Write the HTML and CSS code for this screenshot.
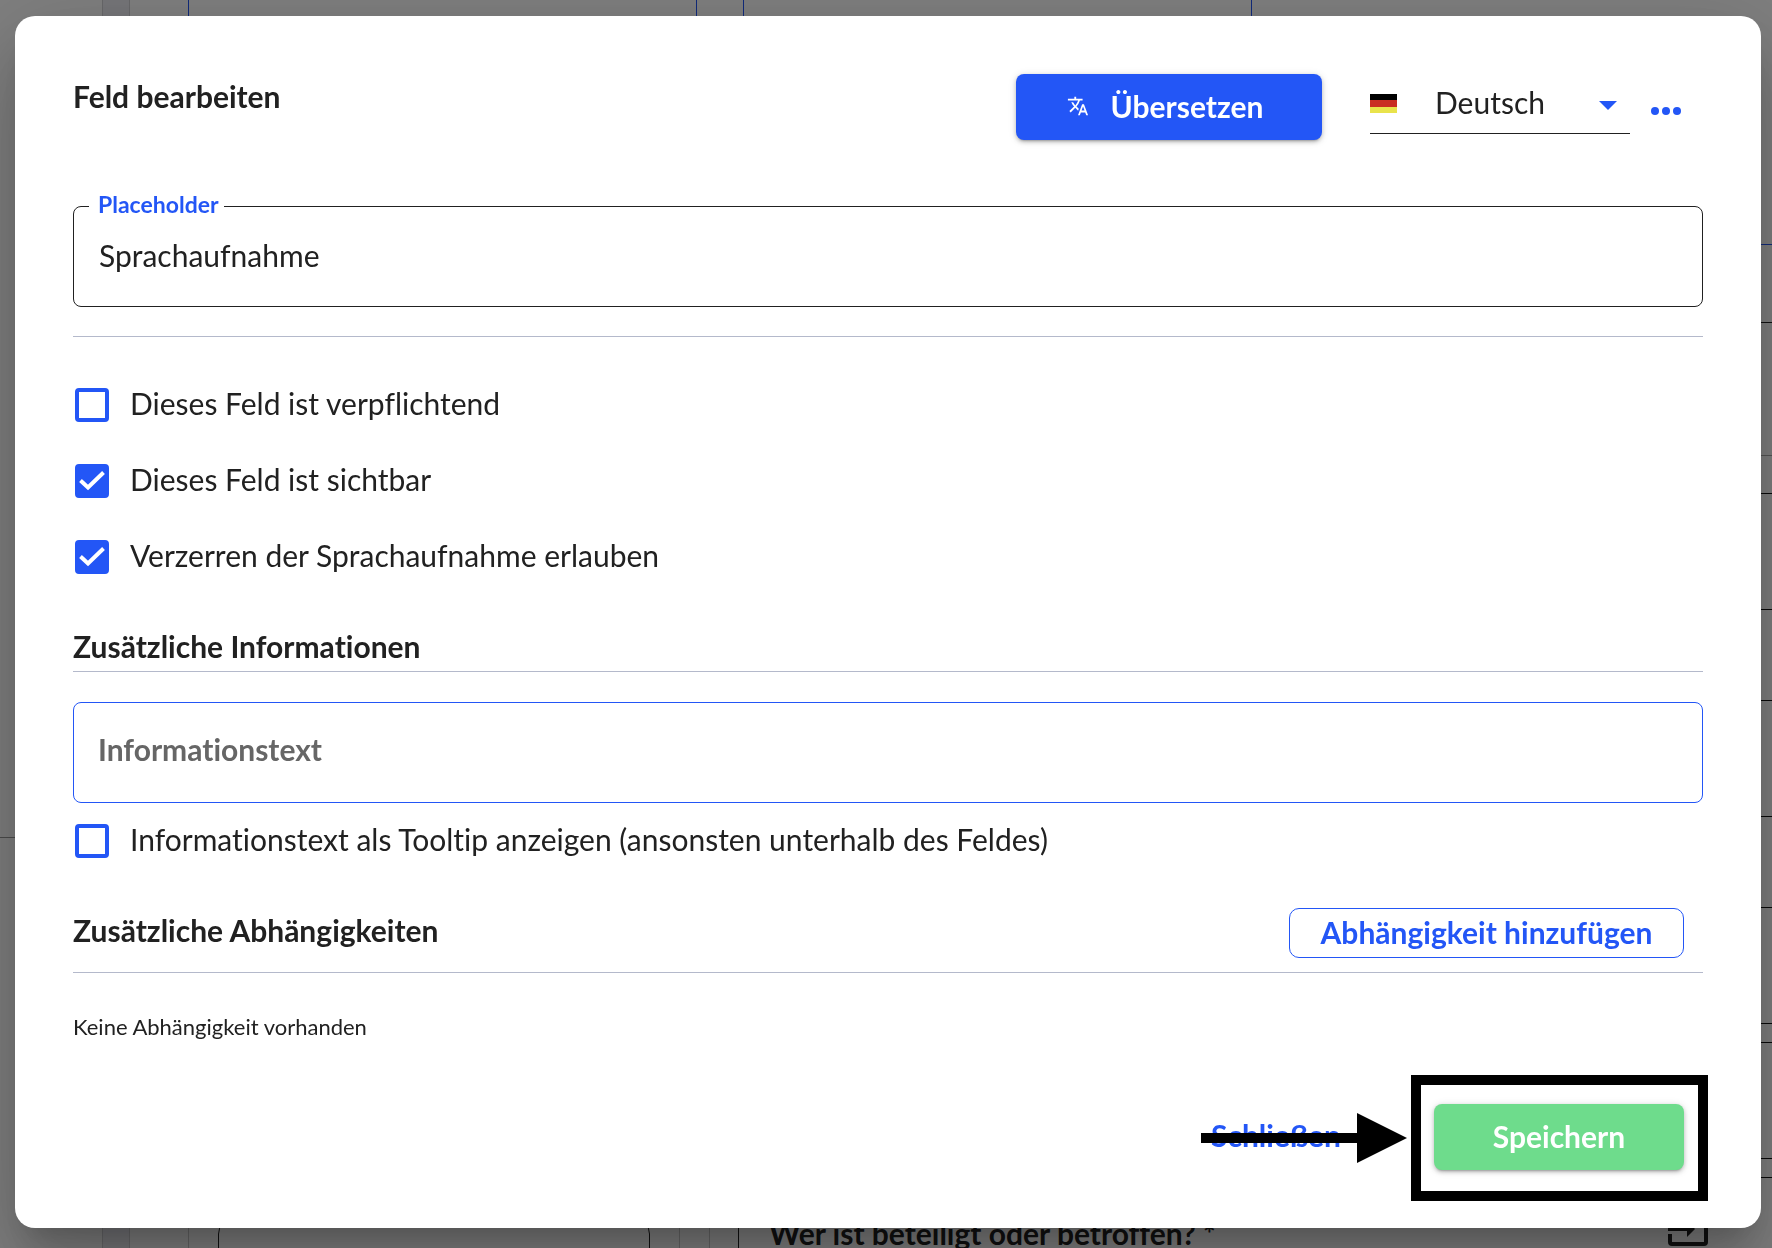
FILE: index.html
```html
<!DOCTYPE html>
<html lang="de">
<head>
<meta charset="utf-8">
<meta name="viewport" content="width=device-width, initial-scale=1">
<title>Feld bearbeiten</title>
<link rel="stylesheet" href="styles.css">
</head>
<body>
<div class="page" aria-hidden="true">
  <div class="sidebar"><div class="sidebar-main"></div><div class="sidebar-foot"></div></div>
  <div class="rail"></div>
  <div class="board">
    <div class="board-top">
      <div class="card"></div>
      <div class="card"></div>
    </div>
    <div class="board-bottom">
      <div class="group"><div class="group-field"></div></div>
      <div class="form">
        <div class="question">
          <span>Wer ist beteiligt oder betroffen? *</span>
          <svg class="enter-icon" viewBox="0 0 40 40" width="40" height="40"><path d="M2 16V8q0-2 2-2h32q2 0 2 2v26q0 2-2 2H4q-2 0-2-2v-8M0 21h20" fill="none" stroke="currentColor" stroke-width="4"/><path d="M19 13l8 8-8 8z" fill="currentColor"/></svg>
        </div>
      </div>
    </div>
  </div>
  <div class="options">
    <div class="opt opt-blue"></div>
    <div class="opt opt-plain"></div>
    <div class="opt opt-light"></div>
    <div class="opt-field"></div>
    <div class="opt-field wide"></div>
    <div class="opt-field"></div>
    <div class="opt-field"></div>
    <div class="opt-field"></div>
  </div>
</div>

<div class="overlay">
  <main class="dialog" role="dialog" aria-labelledby="dialog-title">
    <header class="dialog-header">
      <h1 class="title" id="dialog-title">Feld bearbeiten</h1>
      <button class="btn btn-primary" type="button">
        <svg class="translate-icon" viewBox="0 0 24 24" width="22" height="22"><path fill="currentColor" d="M12.87 15.07l-2.54-2.51.03-.03A17.52 17.52 0 0 0 14.07 6H17V4h-7V2H8v2H1v1.99h11.17C11.5 7.92 10.44 9.75 9 11.35 8.07 10.32 7.3 9.19 6.69 8h-2c.73 1.63 1.73 3.17 2.98 4.56l-5.09 5.02L4 19l5-5 3.11 3.11.76-2.04zM18.5 10h-2L12 22h2l1.12-3h4.75L21 22h2l-4.5-12zm-2.62 7l1.62-4.33L19.12 17h-3.24z"/></svg>
        <span>Übersetzen</span>
      </button>
      <div class="language">
        <svg class="flag" viewBox="0 0 27 19" width="27" height="19"><path fill="#000" d="M0 0h27v6H0z"/><path fill="#c92d22" d="M0 6h27v7H0z"/><path fill="#e9e34b" d="M0 13h27v6H0z"/></svg>
        <select class="language-select" aria-label="Sprache"><option>Deutsch</option></select>
        <svg class="caret" viewBox="0 0 18 9" width="18" height="9"><path fill="currentColor" d="M0 0h18L9 9z"/></svg>
      </div>
      <button class="more" type="button" aria-label="Mehr">
        <svg viewBox="0 0 30 8" width="30" height="8"><g fill="currentColor"><circle cx="4" cy="4" r="4"/><circle cx="15" cy="4" r="4"/><circle cx="26" cy="4" r="4"/></g></svg>
      </button>
    </header>

    <fieldset class="outlined">
      <legend><label for="placeholder">Placeholder</label></legend>
      <input id="placeholder" type="text" value="Sprachaufnahme">
    </fieldset>
    <hr class="divider">

    <div class="checks">
      <label class="check"><span class="box"><input type="checkbox"></span><span class="check-text">Dieses Feld ist verpflichtend</span></label>
      <label class="check"><span class="box"><input type="checkbox" checked><svg viewBox="0 0 34 34" width="34" height="34"><path d="M5.5 16.5l7.5 7L28.5 8.5"/></svg></span><span class="check-text">Dieses Feld ist sichtbar</span></label>
      <label class="check"><span class="box"><input type="checkbox" checked><svg viewBox="0 0 34 34" width="34" height="34"><path d="M5.5 16.5l7.5 7L28.5 8.5"/></svg></span><span class="check-text">Verzerren der Sprachaufnahme erlauben</span></label>
    </div>

    <h2 class="section-title">Zusätzliche Informationen</h2>
    <input class="info" type="text" placeholder="Informationstext" aria-label="Informationstext">
    <label class="check"><span class="box"><input type="checkbox"></span><span class="check-text">Informationstext als Tooltip anzeigen (ansonsten unterhalb des Feldes)</span></label>

    <div class="section-bar">
      <h2>Zusätzliche Abhängigkeiten</h2>
      <button class="btn-outline" type="button">Abhängigkeit hinzufügen</button>
    </div>
    <p class="empty">Keine Abhängigkeit vorhanden</p>

    <footer class="dialog-footer">
      <button class="btn-text" type="button">Schließen</button>
      <div class="highlight">
        <button class="btn btn-save" type="button">Speichern</button>
        <svg class="arrow" viewBox="0 0 206 50" width="206" height="50"><path d="M0 20h156V0l50 25-50 25V30H0z"/></svg>
      </div>
    </footer>
  </main>
</div>
</body>
</html>
```
FILE: styles.css
```css
* { box-sizing: border-box; }

body {
  margin: 0;
  background: #fff;
  color: #212121;
  font: 30px/40px Lato, "Noto Sans", sans-serif;
  font-variant-ligatures: none;
}

button, input, select { font: inherit; font-variant-ligatures: none; color: inherit; margin: 0; }
button { cursor: pointer; }
h1, h2 { margin: 0; font-size: 30px; font-weight: 700; }

/* Page behind the dialog */
.page { display: flex; height: 100vh; overflow: hidden; }
.sidebar { display: flex; flex-direction: column; width: 103px; border-right: 1px solid #d0d0d4; }
.sidebar-main { flex: 1; }
.sidebar-foot { height: 411px; border-top: 1px solid #999; }
.rail { width: 27px; background: #ececf2; border-right: 1px solid #d0d0d4; }
.board { flex: 1; display: flex; flex-direction: column; padding-left: 58px; }
.board-top { flex: 1; display: flex; gap: 46px; }
.card { width: 509px; border: 1px solid #2356f6; border-width: 0 1px; }
.board-bottom { display: flex; gap: 29px; height: 60px; }
.group { width: 492px; padding: 30px 29px 0; border: 1px solid #ccc; border-width: 0 1px; }
.group-field { height: 60px; border: 1px solid #222; border-radius: 16px; }
.form { flex: 1; padding-left: 28px; border-left: 1px solid #ccc; }
.question { display: flex; justify-content: space-between; padding: 20px 52px 0 30px; border-left: 1px solid #222; font-weight: 700; line-height: 50px; }
.enter-icon { flex: none; }
.options { width: 12px; padding-top: 244px; }
.opt { border-top: 1px solid #222; }
.opt-blue { height: 78px; border-color: #2356f6; }
.opt-plain { height: 133px; }
.opt-light { height: 38px; border-color: #aaa; }
.opt-field { height: 117px; margin-bottom: 18px; border: 1px solid #111; border-width: 1px 0; }
.opt-field.wide { margin-top: 90px; margin-bottom: 90px; }

/* Dialog */
.overlay { position: fixed; inset: 0; padding: 16px 11px 20px 15px; background: rgba(0, 0, 0, .5); overflow: auto; }
.dialog {
  padding: 58px;
  border-radius: 20px;
  background: #fff;
  box-shadow: 0 22px 30px -14px rgba(0, 0, 0, .2), 0 48px 76px 6px rgba(0, 0, 0, .14), 0 18px 92px 16px rgba(0, 0, 0, .12);
}
.dialog-header { display: flex; align-items: flex-start; }
.title { flex: 1; line-height: 44px; }

.btn {
  display: flex;
  align-items: center;
  justify-content: center;
  height: 66px;
  padding: 0 0 2px;
  border: 0;
  border-radius: 8px;
  color: #fff;
  font-weight: 700;
  box-shadow: 0 3px 2px -2px rgba(0, 0, 0, .2), 0 2px 4px rgba(0, 0, 0, .2), 0 1px 8px rgba(0, 0, 0, .12);
}
.btn-primary { width: 306px; gap: 22px; padding-right: 8px; background: #2356f6; }
.btn-save { width: 250px; background: #6edc8c; }

.language { position: relative; width: 260px; margin-left: 48px; }
.language-select {
  width: 100%;
  height: 60px;
  padding: 0 40px 4px 65px;
  border: 0;
  border-bottom: 1px solid #212121;
  border-radius: 0;
  background: none;
  appearance: none;
}
.flag { position: absolute; left: 0; top: 20px; }
.caret { position: absolute; right: 13px; top: 27px; color: #2356f6; pointer-events: none; }
.more {
  display: flex;
  align-items: center;
  height: 73px;
  margin: 0 22px 0 21px;
  padding: 0;
  border: 0;
  background: none;
  color: #2356f6;
}

.outlined { margin: 46px 0 0; padding: 0; border: 1px solid #212121; border-radius: 8px; }
.outlined legend {
  margin-left: 15px;
  padding: 0 5px 0 9px;
  color: #2356f6;
  font-size: 23px;
  font-weight: 700;
  line-height: 26px;
}
.outlined label { display: block; height: 26px; line-height: 22px; }
.outlined input { display: block; width: 100%; height: 87px; padding: 0 25px 16px; border: 0; background: none; }
.divider { margin: 29px 0 30px; border: 0; border-top: 1px solid #b4b9cb; }

.check { display: flex; align-items: center; gap: 21px; height: 76px; padding-left: 2px; }
.check-text { padding-bottom: 4px; }
.box { display: grid; flex: none; width: 34px; height: 34px; }
.box > * { grid-area: 1 / 1; }
.box input { width: 34px; height: 34px; border: 4px solid #2356f6; border-radius: 4px; appearance: none; }
.box input:checked { background: #2356f6; }
.box path { fill: none; stroke: #fff; stroke-width: 4; }

.section-title { margin: 32px 0 30px; padding-bottom: 6px; border-bottom: 1px solid #b4b9cb; line-height: 38px; }
.info { display: block; width: 100%; height: 101px; padding: 0 24px 8px; border: 1px solid #2356f6; border-radius: 8px; background: none; }
.info::placeholder { color: #666; font-weight: 700; opacity: 1; }

.section-bar {
  display: flex;
  align-items: center;
  justify-content: space-between;
  margin: 29px 0 38px;
  padding: 0 19px 14px 0;
  border-bottom: 1px solid #b4b9cb;
}
.section-bar h2 { padding-bottom: 6px; }
.btn-outline { width: 395px; height: 50px; padding: 0 0 2px; border: 1px solid #2356f6; border-radius: 10px; background: none; color: #2356f6; font-weight: 700; }
.empty { margin: 0; font-size: 22px; line-height: 32px; }

.dialog-footer { display: flex; align-items: center; justify-content: flex-end; gap: 65px; margin-top: 61px; padding-right: 19px; }
.btn-text { width: 186px; height: 66px; padding: 0 0 4px; border: 0; background: none; color: #2356f6; font-weight: 700; }

/* Tutorial marker round the save button */
.highlight { position: relative; }
.highlight::before { content: ""; position: absolute; inset: -29px -24px -31px -23px; border: 10px solid #000; pointer-events: none; }
.arrow { position: absolute; right: 277px; top: 9px; pointer-events: none; }
```
